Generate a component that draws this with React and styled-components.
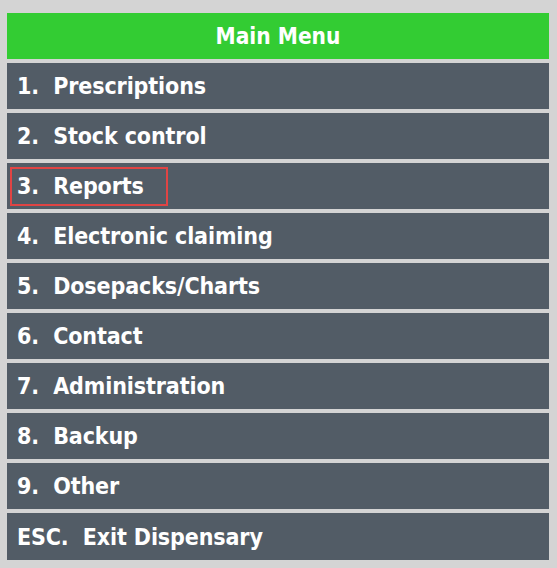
import React from "react";
import styled, { createGlobalStyle } from "styled-components";

const Global = createGlobalStyle`
  html, body { margin: 0; padding: 0; background: #d4d4d4; }
  body { font-family: "DejaVu Sans Condensed", "DejaVu Sans", Verdana, sans-serif; }
`;

const Menu = styled.div`
  display: flex;
  flex-direction: column;
  gap: 4px;
  padding: 13px 8px 8px 7px;
`;

const Header = styled.div`
  height: 46px;
  background: #33cc33;
  color: #fff;
  font-weight: bold;
  font-size: 22.5px;
  display: flex;
  align-items: center;
  justify-content: center;
`;

const Row = styled.div`
  height: ${(p) => (p.$last ? 47 : 46)}px;
  background: #525c66;
  display: flex;
  align-items: center;
  padding-left: 3px;
`;

const Label = styled.span`
  box-sizing: border-box;
  display: flex;
  align-items: center;
  height: 39px;
  padding: 0 22px 0 5px;
  border: 2px solid ${(p) => (p.$focused ? "#e04444" : "transparent")};
  color: #fff;
  font-weight: bold;
  font-size: 23px;
  letter-spacing: -0.12px;
  white-space: pre;
`;

const items = [
  ["1.", "Prescriptions"],
  ["2.", "Stock control"],
  ["3.", "Reports"],
  ["4.", "Electronic claiming"],
  ["5.", "Dosepacks/Charts"],
  ["6.", "Contact"],
  ["7.", "Administration"],
  ["8.", "Backup"],
  ["9.", "Other"],
  ["ESC.", "Exit Dispensary"],
];

export default function App() {
  return (
    <>
      <Global />
      <Menu>
        <Header>Main Menu</Header>
        {items.map(([key, text], i) => (
          <Row key={key} $last={i === items.length - 1}>
            <Label $focused={key === "3."}>{`${key}  ${text}`}</Label>
          </Row>
        ))}
      </Menu>
    </>
  );
}
